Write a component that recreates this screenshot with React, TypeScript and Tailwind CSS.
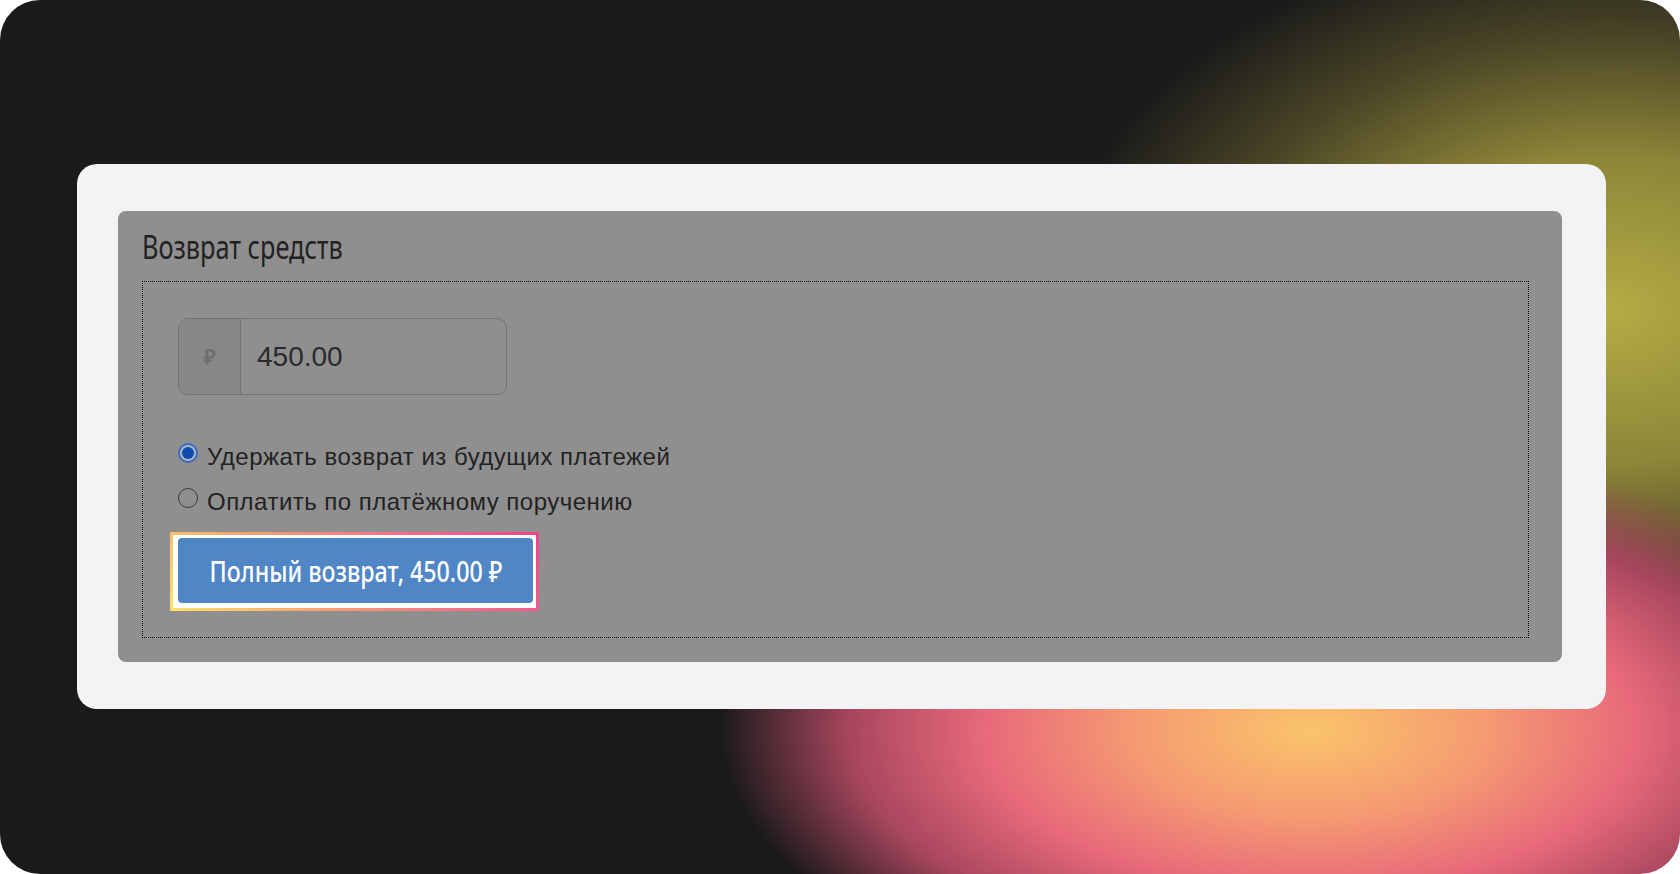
import React from "react";

const narrow = "font-['Noto_Sans','Open_Sans',sans-serif] whitespace-nowrap";

const Radio = ({ checked, label }: { checked?: boolean; label: string }) => {
  return (
    <label className="flex h-[45px] items-center gap-[9px]">
      {checked ? (
        <span className="flex h-[20px] w-[20px] items-center justify-center rounded-full border-[2px] border-[#3a6cc0] bg-[#a9b4c4]">
          <span className="h-[12px] w-[12px] rounded-full bg-[#0f4aa8]"></span>
        </span>
      ) : (
        <span className="h-[20px] w-[20px] rounded-full border-[1.5px] border-[#3a3a3a]"></span>
      )}
      <span className="mt-[9px] font-['Liberation_Sans',Arial,sans-serif] text-[24px] tracking-[0.02em] text-[#222]">
        {label}
      </span>
    </label>
  );
};

const App = () => {
  return (
    <div className="h-[874px] w-[1680px] bg-white">
      <div className="flex h-[874px] w-[1680px] flex-col overflow-hidden rounded-[40px] bg-[#1a1a1a] bg-[radial-gradient(ellipse_590px_290px_at_1310px_730px,#fac46a_0%,#f59a72_30%,#e86a7a_55%,#a8465e_78%,rgba(26,26,26,0)_100%),radial-gradient(ellipse_560px_380px_at_1610px_310px,#b4ac44_0%,#8e8638_40%,#4a4526_72%,rgba(26,26,26,0)_100%)]">
        <div className="ml-[77px] mt-[164px] h-[545px] w-[1529px] rounded-[20px] bg-[#f3f3f5] pl-[41px] pt-[47px]">
          <div className="h-[451px] w-[1444px] rounded-[8px] bg-[#8f8f8f] px-[24px] pt-[12px]">
            <h2 className={`${narrow} h-[58px] origin-left scale-x-[0.79] text-[32px] leading-[48px] text-[#222]`}>
              Возврат средств
            </h2>
            <div className="h-[357px] w-[1387px] border border-dotted border-black pl-[35px] pt-[36px]">
              <div className="flex h-[77px] w-[329px] overflow-hidden rounded-[10px] border border-[#737373]">
                <div className="flex w-[62px] items-center justify-center border-r border-[#737373] bg-[#878787] font-['Liberation_Sans',Arial,sans-serif] text-[20px] font-bold text-[#6e6e6e]">
                  ₽
                </div>
                <div className="flex flex-1 items-center pl-[16px] font-['Liberation_Sans',Arial,sans-serif] text-[28px] text-[#2a2a2a]">
                  450.00
                </div>
              </div>
              <div className="mt-[35px] flex flex-col">
                <Radio checked label="Удержать возврат из будущих платежей" />
                <Radio label="Оплатить по платёжному поручению" />
              </div>
              <div className="ml-[-8px] mt-[12px] w-fit bg-[linear-gradient(45deg,#fde26a_0%,#f7a070_35%,#f46c8a_70%,#f0428a_100%)] p-[3px]">
                <div className="bg-white pb-[5px] pl-[5px] pr-[3px] pt-[3px]">
                  <button className="flex h-[65px] w-[355px] items-center justify-center rounded-[4px] bg-[#5086c6] text-white">
                    <span className={`${narrow} scale-x-[0.8] text-[29px] font-medium`}>Полный возврат, 450.00 ₽</span>
                  </button>
                </div>
              </div>
            </div>
          </div>
        </div>
      </div>
    </div>
  );
};

export default App;
